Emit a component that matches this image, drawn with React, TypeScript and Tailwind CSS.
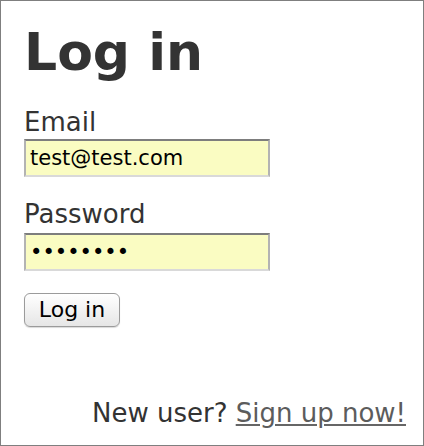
export default function App() {
  return (
    <div className="flex h-[446px] w-[424px] flex-col border border-[#7f7f7f] bg-white pl-[23px] pr-[17px] pt-[25px] pb-[19px] font-['DejaVu_Sans',Verdana,sans-serif] text-[#333]">
      <h1 className="text-[52px] font-bold leading-none">Log in</h1>

      <form className="mt-[31px] flex flex-col" onSubmit={(e) => e.preventDefault()}>
        <label htmlFor="email" className="text-[26px] leading-none">Email</label>
        <input
          id="email"
          type="text"
          readOnly
          value="test@test.com"
          className="mt-[4px] h-[38px] w-[246px] border-2 border-x-[#b3b3b3] border-t-[#7d7d7d] border-b-[#d9d9d9] bg-[#fafcc2] px-[4px] text-[21px] text-black outline-none"
        />

        <label htmlFor="password" className="mt-[24px] text-[26px] leading-none">Password</label>
        <input
          id="password"
          type="password"
          readOnly
          value="12345678"
          className="mt-[6px] h-[38px] w-[246px] border-2 border-x-[#b3b3b3] border-t-[#7d7d7d] border-b-[#d9d9d9] bg-[#fafcc2] px-[4px] text-[21px] text-black outline-none"
        />

        <div className="mt-[22px]">
          <button
            type="submit"
            className="h-[34px] w-[96px] rounded-[6px] border border-[#9b9b9b] bg-gradient-to-b from-white to-[#e6e6e6] text-[22px] leading-none text-black shadow-[0_1px_1px_rgba(0,0,0,0.15)]"
          >
            Log in
          </button>
        </div>
      </form>

      <p className="mt-auto text-right text-[26px] leading-none">
        New user? <a href="#" className="text-[#5c5c5c] underline decoration-[#666]">Sign up now!</a>
      </p>
    </div>
  );
}
